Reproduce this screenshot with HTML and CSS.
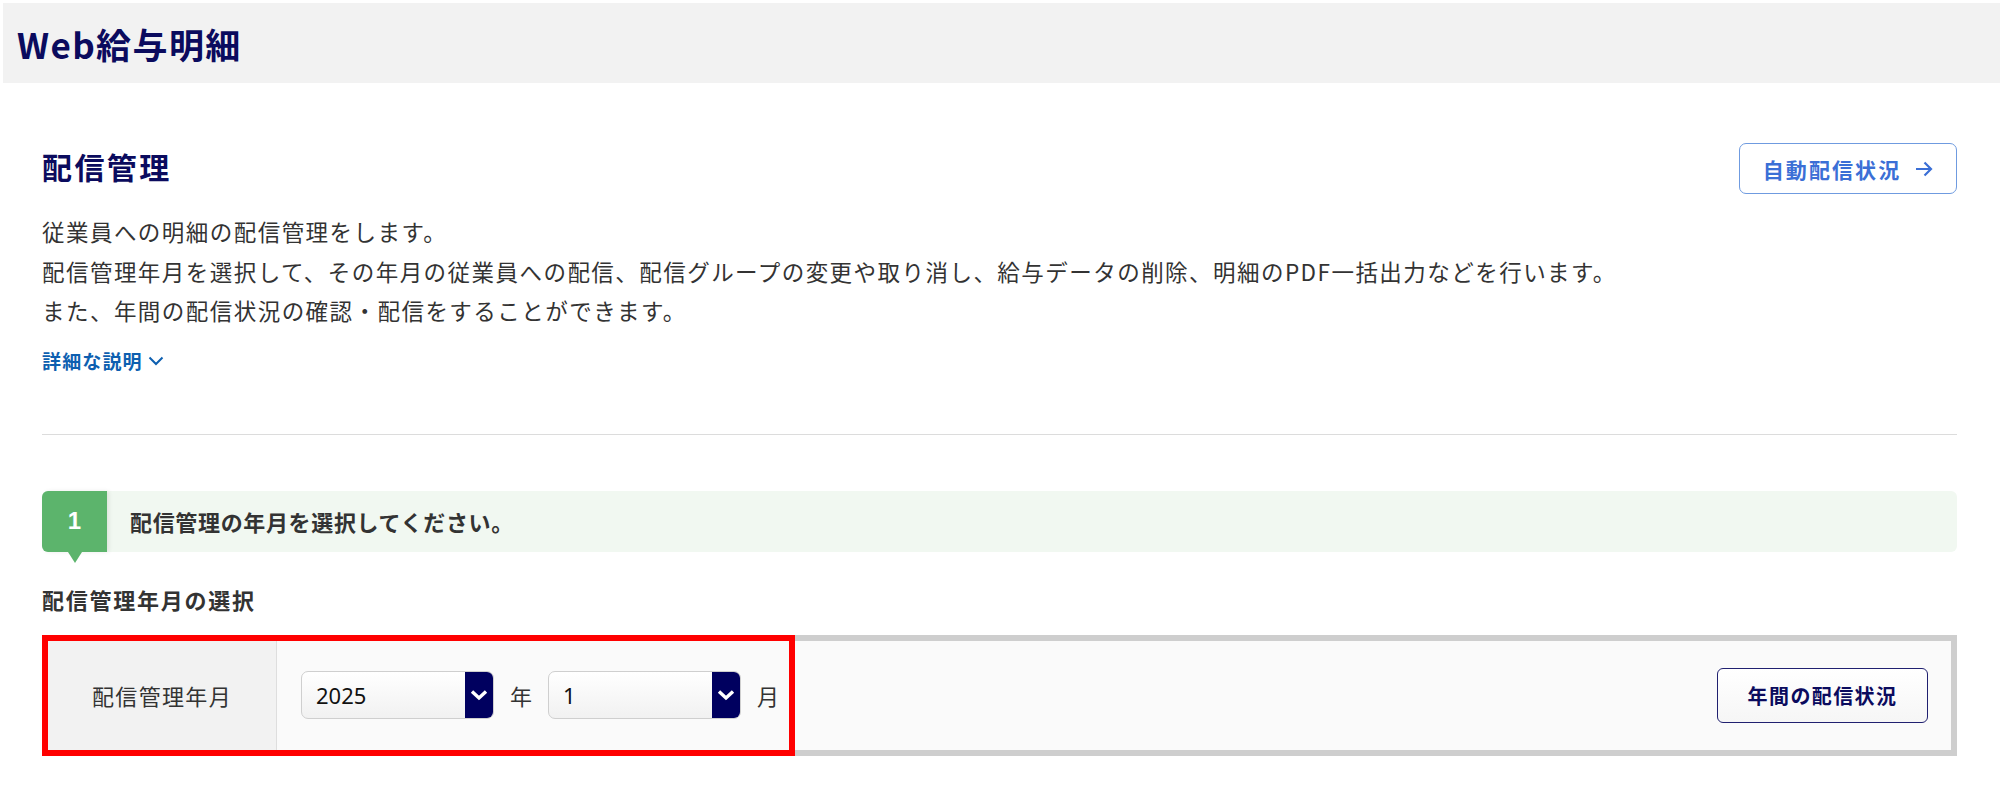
FILE: index.html
```html
<!DOCTYPE html>
<html lang="ja">
<head>
  <meta charset="UTF-8">
  <title>Web給与明細 - 配信管理</title>
  <link rel="stylesheet" href="styles.css">
</head>
<body>
  <header class="app-header">
    <h1>Web給与明細</h1>
  </header>
  <main class="page">
    <div class="page-head">
      <h2>配信管理</h2>
      <a class="btn-outline" href="#">自動配信状況
        <svg class="arrow" width="18" height="16" viewBox="0 0 18 16"><path d="M1 8 H16 M9.5 1.5 L16 8 L9.5 14.5" fill="none" stroke="currentColor" stroke-width="2.2"/></svg>
      </a>
    </div>
    <p class="lead">
      従業員への明細の配信管理をします。<br>
      配信管理年月を選択して、その年月の従業員への配信、配信グループの変更や取り消し、給与データの削除、明細のPDF一括出力などを行います。<br>
      また、年間の配信状況の確認・配信をすることができます。
    </p>
    <a class="toggle" href="#">詳細な説明
      <svg width="16" height="10" viewBox="0 0 16 10"><path d="M1.5 1.5 L8 8 L14.5 1.5" fill="none" stroke="currentColor" stroke-width="2"/></svg>
    </a>
    <hr class="divider">

    <div class="step">
      <span class="step-num">1</span>
      <span class="step-text">配信管理の年月を選択してください。</span>
    </div>

    <h3 class="sub">配信管理年月の選択</h3>

    <div class="period-box">
      <div class="period-label">配信管理年月</div>
      <div class="period-field">
        <div class="select-wrap">
          <select class="select"><option>2025</option></select>
          <span class="select-arrow"><svg width="18" height="12" viewBox="0 0 18 12"><path d="M2 2.5 L9 9 L16 2.5" fill="none" stroke="#fff" stroke-width="3.4"/></svg></span>
        </div>
        <span class="unit">年</span>
        <div class="select-wrap">
          <select class="select"><option>1</option></select>
          <span class="select-arrow"><svg width="18" height="12" viewBox="0 0 18 12"><path d="M2 2.5 L9 9 L16 2.5" fill="none" stroke="#fff" stroke-width="3.4"/></svg></span>
        </div>
        <span class="unit">月</span>
        <button class="btn-navy">年間の配信状況</button>
      </div>
      <div class="highlight"></div>
    </div>
  </main>
</body>
</html>
```

FILE: styles.css
```css
* {
  box-sizing: border-box;
}
body {
  margin: 0;
  padding: 3px 0 0 3px;
  background: #fff;
  color: #333;
  font-family: "Noto Sans CJK JP", "Noto Sans", sans-serif;
}
.app-header {
  height: 80px;
  background: #f2f2f2;
  display: flex;
  align-items: center;
  padding-left: 14px;
}
.app-header h1 {
  margin: 0;
  font-size: 35px;
  font-weight: 700;
  color: #0b0b5e;
  letter-spacing: 0.04em;
}
.page {
  padding: 60px 43px 0 39px;
}
.page-head {
  display: flex;
  justify-content: space-between;
  align-items: flex-start;
}
.page-head h2 {
  margin: 0;
  font-size: 30px;
  line-height: 46px;
  font-weight: 700;
  color: #0b0b5e;
  letter-spacing: 0.08em;
}
.btn-outline {
  display: flex;
  align-items: center;
  height: 51px;
  width: 218px;
  justify-content: center;
  border: 1px solid #6f9be0;
  border-radius: 7px;
  color: #3b6fd6;
  font-size: 21px;
  font-weight: 700;
  letter-spacing: 0.1em;
  text-decoration: none;
}
.btn-outline .arrow {
  margin-left: 14px;
}
.lead {
  margin: 18px 0 0;
  font-size: 22.5px;
  line-height: 39.5px;
  letter-spacing: 0.065em;
  color: #333;
}
.toggle {
  display: inline-flex;
  align-items: center;
  gap: 5px;
  margin-top: 16px;
  line-height: 28px;
  font-size: 19px;
  font-weight: 700;
  color: #0d5fb0;
  text-decoration: none;
  letter-spacing: 0.06em;
}
.divider {
  margin: 59px 0 0;
  border: 0;
  border-top: 1px solid #dcdcdc;
}
.step {
  margin-top: 56px;
  height: 61px;
  display: flex;
  align-items: center;
  background: #f1f8f1;
  border-radius: 6px;
}
.step-num {
  position: relative;
  width: 65px;
  height: 100%;
  display: flex;
  align-items: center;
  justify-content: center;
  background: #5cb46c;
  border-radius: 6px 0 0 6px;
  color: #fff;
  font-family: "Liberation Sans", sans-serif;
  font-size: 24px;
  font-weight: 700;
  box-shadow: 2px 0 4px rgba(0, 0, 0, 0.08);
}
.step-num::after {
  content: "";
  position: absolute;
  left: 26px;
  bottom: -11px;
  border-left: 7px solid transparent;
  border-right: 7px solid transparent;
  border-top: 11px solid #5cb46c;
}
.step-text {
  margin-left: 23px;
  font-size: 22px;
  font-weight: 700;
  color: #333;
  letter-spacing: 0.03em;
}
.sub {
  margin: 32px 0 0;
  font-size: 22px;
  line-height: 30px;
  font-weight: 700;
  color: #333;
  letter-spacing: 0.08em;
}
.period-box {
  position: relative;
  margin-top: 21px;
  height: 121px;
  display: flex;
  border: 6px solid #cecece;
  background: #fafafa;
}
.period-label {
  width: 229px;
  display: flex;
  align-items: center;
  justify-content: center;
  background: #f2f2f2;
  border-right: 1px solid #dedede;
  font-size: 22px;
  letter-spacing: 0.06em;
  color: #333;
}
.period-field {
  flex: 1;
  display: flex;
  align-items: center;
  padding: 0 23px 0 24px;
}
.select-wrap {
  display: flex;
  width: 193px;
  height: 48px;
  border: 1px solid #cfcfcf;
  border-radius: 7px;
  overflow: hidden;
  background: linear-gradient(#ffffff, #f1f1f1);
}
.select {
  flex: 1;
  min-width: 0;
  appearance: none;
  -webkit-appearance: none;
  border: 0;
  background: transparent;
  padding-left: 14px;
  font-family: "Noto Sans", sans-serif;
  font-size: 22px;
  color: #111;
  outline: none;
}
.select-arrow {
  width: 28px;
  display: flex;
  align-items: center;
  justify-content: center;
  background: #00005f;
}
.unit {
  margin: 0 16px;
  font-size: 22px;
  color: #333;
}
.btn-navy {
  margin-left: auto;
  width: 211px;
  height: 55px;
  border: 1px solid #202070;
  border-radius: 6px;
  background: linear-gradient(#ffffff, #f6f6f6);
  color: #0b0b5e;
  font-family: inherit;
  font-size: 20px;
  font-weight: 700;
  letter-spacing: 0.07em;
}
.highlight {
  position: absolute;
  left: -6px;
  top: -6px;
  width: 753px;
  height: 121px;
  border: 6px solid #ff0000;
}
```
